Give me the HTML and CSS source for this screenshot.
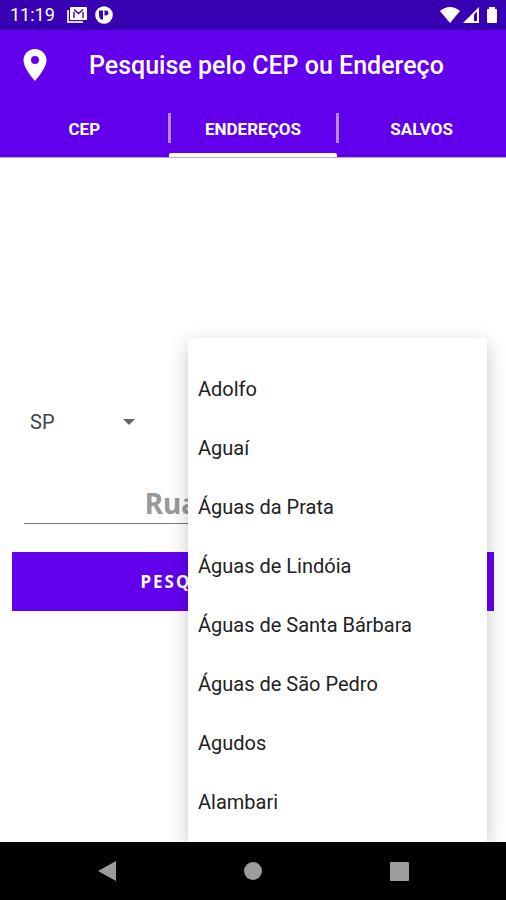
FILE: index.html
```html
<!DOCTYPE html>
<html lang="pt-BR">
<head>
<meta charset="utf-8">
<meta name="viewport" content="width=device-width, initial-scale=1">
<title>Pesquise pelo CEP ou Endereço</title>
<link rel="stylesheet" href="styles.css">
</head>
<body>
<div class="status">
  <span class="clock">11:19</span>
  <svg width="20" height="18" viewBox="0 0 20 18" aria-hidden="true">
    <path d="M1 4v12h15" fill="none" stroke="#ddd6f5" stroke-width="2"/>
    <rect x="3" y="1" width="17" height="13" rx="1" fill="#fff"/>
    <path d="M7 3.500 11.500 7.500 16 3.500M7 6v6M16 6v6" fill="none" stroke="#3700b3" stroke-width="1.400"/>
  </svg>
  <svg width="18" height="18" viewBox="0 0 18 18" aria-hidden="true">
    <circle cx="9" cy="9" r="8.800" fill="#fff"/>
    <path d="M4 4.500h4v9H6Q4 12 4 9zM9.500 4.500H11a2.500 2.500 0 0 1 0 5H9.500z" fill="#3700b3"/>
  </svg>
  <div class="signals">
    <svg width="20" height="18" viewBox="0 0 20 18" aria-hidden="true"><path d="M0 5Q10-3 20 5L10 17z" fill="#fff"/></svg>
    <svg width="18" height="18" viewBox="0 0 18 18" aria-hidden="true"><path d="M1 17 17 1v16z" fill="#fff"/><path d="M12 8.500 15 5.500V15h-3z" fill="#3700b3"/></svg>
    <svg width="12" height="18" viewBox="0 0 12 18" aria-hidden="true"><path d="M3 1h6v2h1q1 0 1 1v12q0 1-1 1H2q-1 0-1-1V4q0-1 1-1h1z" fill="#fff"/></svg>
  </div>
</div>
<header class="header">
  <div class="titlebar">
    <svg class="pin" width="24" height="32" viewBox="0 0 24 32" aria-hidden="true"><path fill-rule="evenodd" d="M12 0C5.500 0 .5 5 .5 11.300.5 19.500 12 32 12 32s11.500-12.500 11.500-20.700C23.500 5 18.500 0 12 0zm0 7a4 4 0 1 1 0 8 4 4 0 0 1 0-8z" fill="#fff"/></svg>
    <h1>Pesquise pelo CEP ou Endereço</h1>
  </div>
  <nav class="tabs">
    <a href="#cep">CEP</a>
    <a href="#enderecos" class="active" aria-current="page">ENDEREÇOS</a>
    <a href="#salvos">SALVOS</a>
  </nav>
</header>
<main class="content">
  <form class="search">
    <div class="state">
      <select aria-label="Estado"><option>SP</option></select>
      <svg width="12" height="6" viewBox="0 0 12 6" aria-hidden="true"><path d="M0 0h12L6 6z" fill="#666"/></svg>
    </div>
    <input class="street" type="text" placeholder="Rua ou Avenida" aria-label="Rua ou Avenida">
    <button class="submit" type="button">PESQUISAR ENDEREÇO</button>
  </form>
  <div class="cities">
    <button type="button">Adolfo</button>
    <button type="button">Aguaí</button>
    <button type="button">Águas da Prata</button>
    <button type="button">Águas de Lindóia</button>
    <button type="button">Águas de Santa Bárbara</button>
    <button type="button">Águas de São Pedro</button>
    <button type="button">Agudos</button>
    <button type="button">Alambari</button>
  </div>
</main>
<footer class="navbar">
  <button type="button" aria-label="Voltar"><svg width="18" height="20" viewBox="0 0 18 20"><path d="M18 0v20L0 10z" fill="#9c9c9c"/></svg></button>
  <button type="button" aria-label="Início"><svg width="18" height="18" viewBox="0 0 18 18"><circle cx="9" cy="9" r="9" fill="#9c9c9c"/></svg></button>
  <button type="button" aria-label="Recentes"><svg width="19" height="19" viewBox="0 0 19 19"><rect width="19" height="19" rx="1" fill="#9c9c9c"/></svg></button>
</footer>
</body>
</html>
```
FILE: styles.css
```css
* { box-sizing: border-box; }

body {
  margin: 0;
  min-height: 100vh;
  display: flex;
  flex-direction: column;
  background: #fff;
  font-family: Roboto, "Liberation Sans", sans-serif;
}

button, input, select {
  border: 0;
  padding: 0;
  background: none;
  font-family: inherit;
}

.status {
  display: flex;
  align-items: center;
  gap: 8px;
  height: 30px;
  padding: 0 8px 0 10px;
  background: #3700b3;
  color: #fff;
}

.clock {
  margin-right: 4px;
  font-size: 18px;
  line-height: 30px;
}

.signals {
  display: flex;
  gap: 2px;
  margin-left: auto;
}

.signals svg:last-child {
  margin-left: 4px;
}

.header {
  background: #6200ee;
  color: #fff;
  border-bottom: 1px solid #b4a6cc;
}

.titlebar {
  display: flex;
  align-items: center;
  gap: 42px;
  height: 70px;
  padding-left: 23px;
}

.titlebar h1 {
  margin: 0;
  font-size: 25px;
  font-weight: 500;
}

.tabs {
  display: grid;
  grid-template-columns: repeat(3, 1fr);
  height: 57px;
}

.tabs a {
  position: relative;
  display: flex;
  align-items: center;
  justify-content: center;
  color: #fff;
  font-size: 17px;
  font-weight: 700;
  text-decoration: none;
}

.tabs a + a::before {
  content: "";
  position: absolute;
  left: 0;
  top: 13px;
  width: 3px;
  height: 30px;
  margin-left: -1px;
  background: #b68af6;
}

.tabs .active::after {
  content: "";
  position: absolute;
  left: 0;
  right: 0;
  bottom: 0;
  height: 4px;
  border-radius: 2px 2px 0 0;
  background: #fff;
}

.content {
  position: relative;
  flex: 1;
  overflow: hidden;
}

.search {
  display: flex;
  flex-direction: column;
  padding: 240px 12px 0;
}

.state {
  position: relative;
  display: flex;
  align-items: center;
  width: 124px;
  height: 48px;
  margin-bottom: 36px;
}

.state select {
  width: 100%;
  height: 48px;
  padding-left: 18px;
  appearance: none;
  color: #444;
  font-size: 20px;
}

.state svg {
  position: absolute;
  right: 1px;
  pointer-events: none;
}

.street {
  height: 42px;
  margin: 0 12px 28px;
  border-bottom: 1px solid #777;
  font-family: "Noto Sans", sans-serif;
  font-size: 28px;
  font-weight: 700;
  text-align: center;
}

.street::placeholder {
  color: #999;
  opacity: 1;
}

.submit {
  height: 59px;
  background: #6200ee;
  color: #fff;
  font-family: "Noto Sans", sans-serif;
  font-size: 17px;
  font-weight: 700;
  letter-spacing: 2px;
}

.cities {
  position: absolute;
  top: 180px;
  left: 188px;
  right: 19px;
  bottom: 0;
  display: flex;
  flex-direction: column;
  padding-top: 21px;
  overflow: hidden;
  border-radius: 3px 3px 0 0;
  background: #fff;
  box-shadow: 0 6px 20px rgba(0, 0, 0, 0.22);
}

.cities button {
  flex: none;
  height: 59px;
  padding-left: 10px;
  color: #222;
  font-size: 20px;
  text-align: left;
}

.navbar {
  display: flex;
  justify-content: center;
  gap: 98px;
  height: 58px;
  background: #000;
}

.navbar button {
  display: flex;
  align-items: center;
  justify-content: center;
  width: 48px;
}
```
